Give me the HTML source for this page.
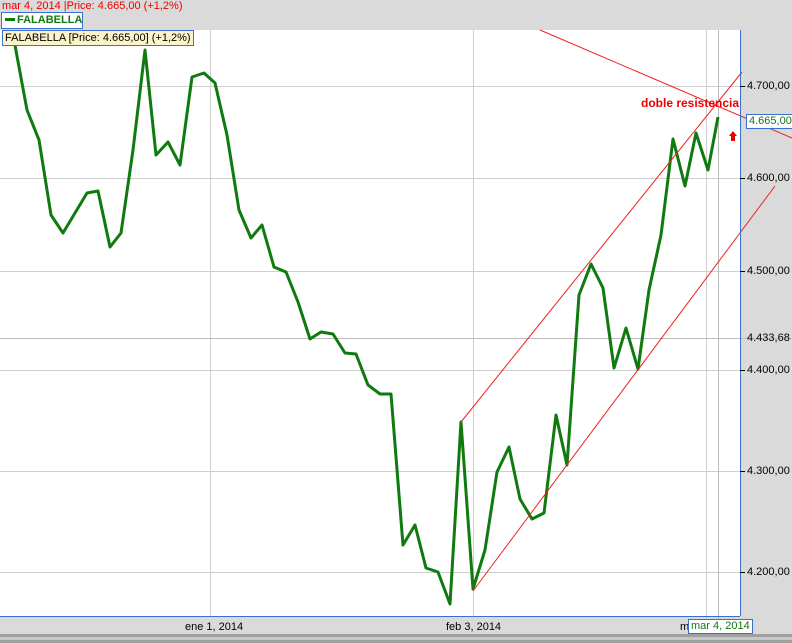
<!DOCTYPE html>
<html><head><style>
body{margin:0;width:792px;height:643px;overflow:hidden;background:#d9dad9;font-family:"Liberation Sans",sans-serif;position:relative}
.a{position:absolute;white-space:nowrap}
</style></head><body>
<svg width="792" height="643" style="position:absolute;left:0;top:0">
<rect x="0" y="0" width="792" height="643" fill="#d9dad9"/>
<rect x="0" y="30" width="740" height="586" fill="#fff"/>
<g stroke="#cfcfcf" stroke-width="1">
<line x1="0" y1="86.5" x2="740" y2="86.5"/><line x1="0" y1="178.5" x2="740" y2="178.5"/>
<line x1="0" y1="271.5" x2="740" y2="271.5"/><line x1="0" y1="370.5" x2="740" y2="370.5"/>
<line x1="0" y1="471.5" x2="740" y2="471.5"/><line x1="0" y1="572.5" x2="740" y2="572.5"/>
<line x1="210.5" y1="30" x2="210.5" y2="616"/><line x1="473.5" y1="30" x2="473.5" y2="616"/>
<line x1="706.5" y1="30" x2="706.5" y2="622"/>
</g>
<line x1="0" y1="338.5" x2="792" y2="338.5" stroke="#bbb"/>
<line x1="718.5" y1="30" x2="718.5" y2="636" stroke="#bbb"/>
<polyline fill="none" stroke="#0f7a0f" stroke-width="3" stroke-linejoin="round" points="14,40 27,110 39,140 51,215 63,233 75,213 87,193 98,191 110,247 121,233 133,150 145,50 156,155 168,142 180,165 192,77 204,73 215,83 227,135 239,210 251,238 262,225 274,267 286,272 298,302 310,339 321,332 333,334 345,353 356,354 368,385 380,394 391,394 403,545 415,525 426,568 438,572 450,604 461,422 473,589 485,550 497,472 509,447 520,499 532,519 544,513 556,415 567,465 579,295 591,264 603,288 614,368 626,328 638,369 649,290 661,235 673,139 685,186 696,133 708,170 718,117"/>
<g stroke="#f02020" stroke-width="1">
<line x1="540" y1="30" x2="792" y2="138"/>
<line x1="461" y1="422" x2="742" y2="72"/>
<line x1="473" y1="591" x2="775" y2="186"/>
</g>
<line x1="740.5" y1="30" x2="740.5" y2="616" stroke="#3a6fd0"/>
<line x1="0" y1="616.5" x2="740" y2="616.5" stroke="#3a6fd0"/>
<g stroke="#000"><line x1="740" y1="86.5" x2="745" y2="86.5"/><line x1="740" y1="178.5" x2="745" y2="178.5"/><line x1="740" y1="271.5" x2="745" y2="271.5"/><line x1="740" y1="370.5" x2="745" y2="370.5"/><line x1="740" y1="471.5" x2="745" y2="471.5"/><line x1="740" y1="572.5" x2="745" y2="572.5"/></g>
<path d="M733,131 L737,136 L735,136 L735,141 L731,141 L731,136 L729,136 Z" fill="#e00"/>
<rect x="0" y="634" width="792" height="9" fill="#a0a0a0"/><rect x="0" y="637" width="792" height="3" fill="#c8c8c8"/>
</svg>
<div class="a" style="left:2px;top:0;font-size:11px;color:#e00">mar 4, 2014 |Price: 4.665,00 (+1,2%)</div>
<div class="a" style="left:1px;top:12px;width:80px;height:15px;border:1px solid #3a6fd0;background:#fff;font-size:11px;font-weight:bold;color:#0f7a0f;line-height:15px"><span style="display:inline-block;width:10px;height:3px;background:#0f7a0f;vertical-align:middle;margin:0 2px 2px 3px"></span>FALABELLA</div>
<div class="a" style="left:2px;top:30px;height:14px;padding:0 2px;border:1px solid #3a6fd0;background:#fdf3c8;font-size:11px;line-height:14px;color:#000">FALABELLA [Price: 4.665,00] (+1,2%)</div>
<div class="a" style="left:641px;top:96px;font-size:12px;font-weight:bold;color:#e00">doble resistencia</div>
<div class="a" style="left:747px;top:80px;font-size:11px">4.700,00</div>
<div class="a" style="left:747px;top:172px;font-size:11px">4.600,00</div>
<div class="a" style="left:747px;top:265px;font-size:11px">4.500,00</div>
<div class="a" style="left:747px;top:332px;font-size:11px">4.433,68</div>
<div class="a" style="left:747px;top:364px;font-size:11px">4.400,00</div>
<div class="a" style="left:747px;top:465px;font-size:11px">4.300,00</div>
<div class="a" style="left:747px;top:566px;font-size:11px">4.200,00</div>
<div class="a" style="left:746px;top:114px;height:13px;padding:0 2px;border:1px solid #3a6fd0;background:#fff;font-size:11px;line-height:13px;color:#0f7a0f">4.665,00</div>
<div class="a" style="left:185px;top:621px;font-size:11px">ene 1, 2014</div>
<div class="a" style="left:446px;top:621px;font-size:11px">feb 3, 2014</div>
<div class="a" style="left:680px;top:621px;font-size:11px">m</div>
<div class="a" style="left:688px;top:619px;height:13px;padding:0 2px;border:1px solid #3a6fd0;background:#fff;font-size:11px;line-height:13px;color:#0f7a0f">mar 4, 2014</div>
</body></html>
